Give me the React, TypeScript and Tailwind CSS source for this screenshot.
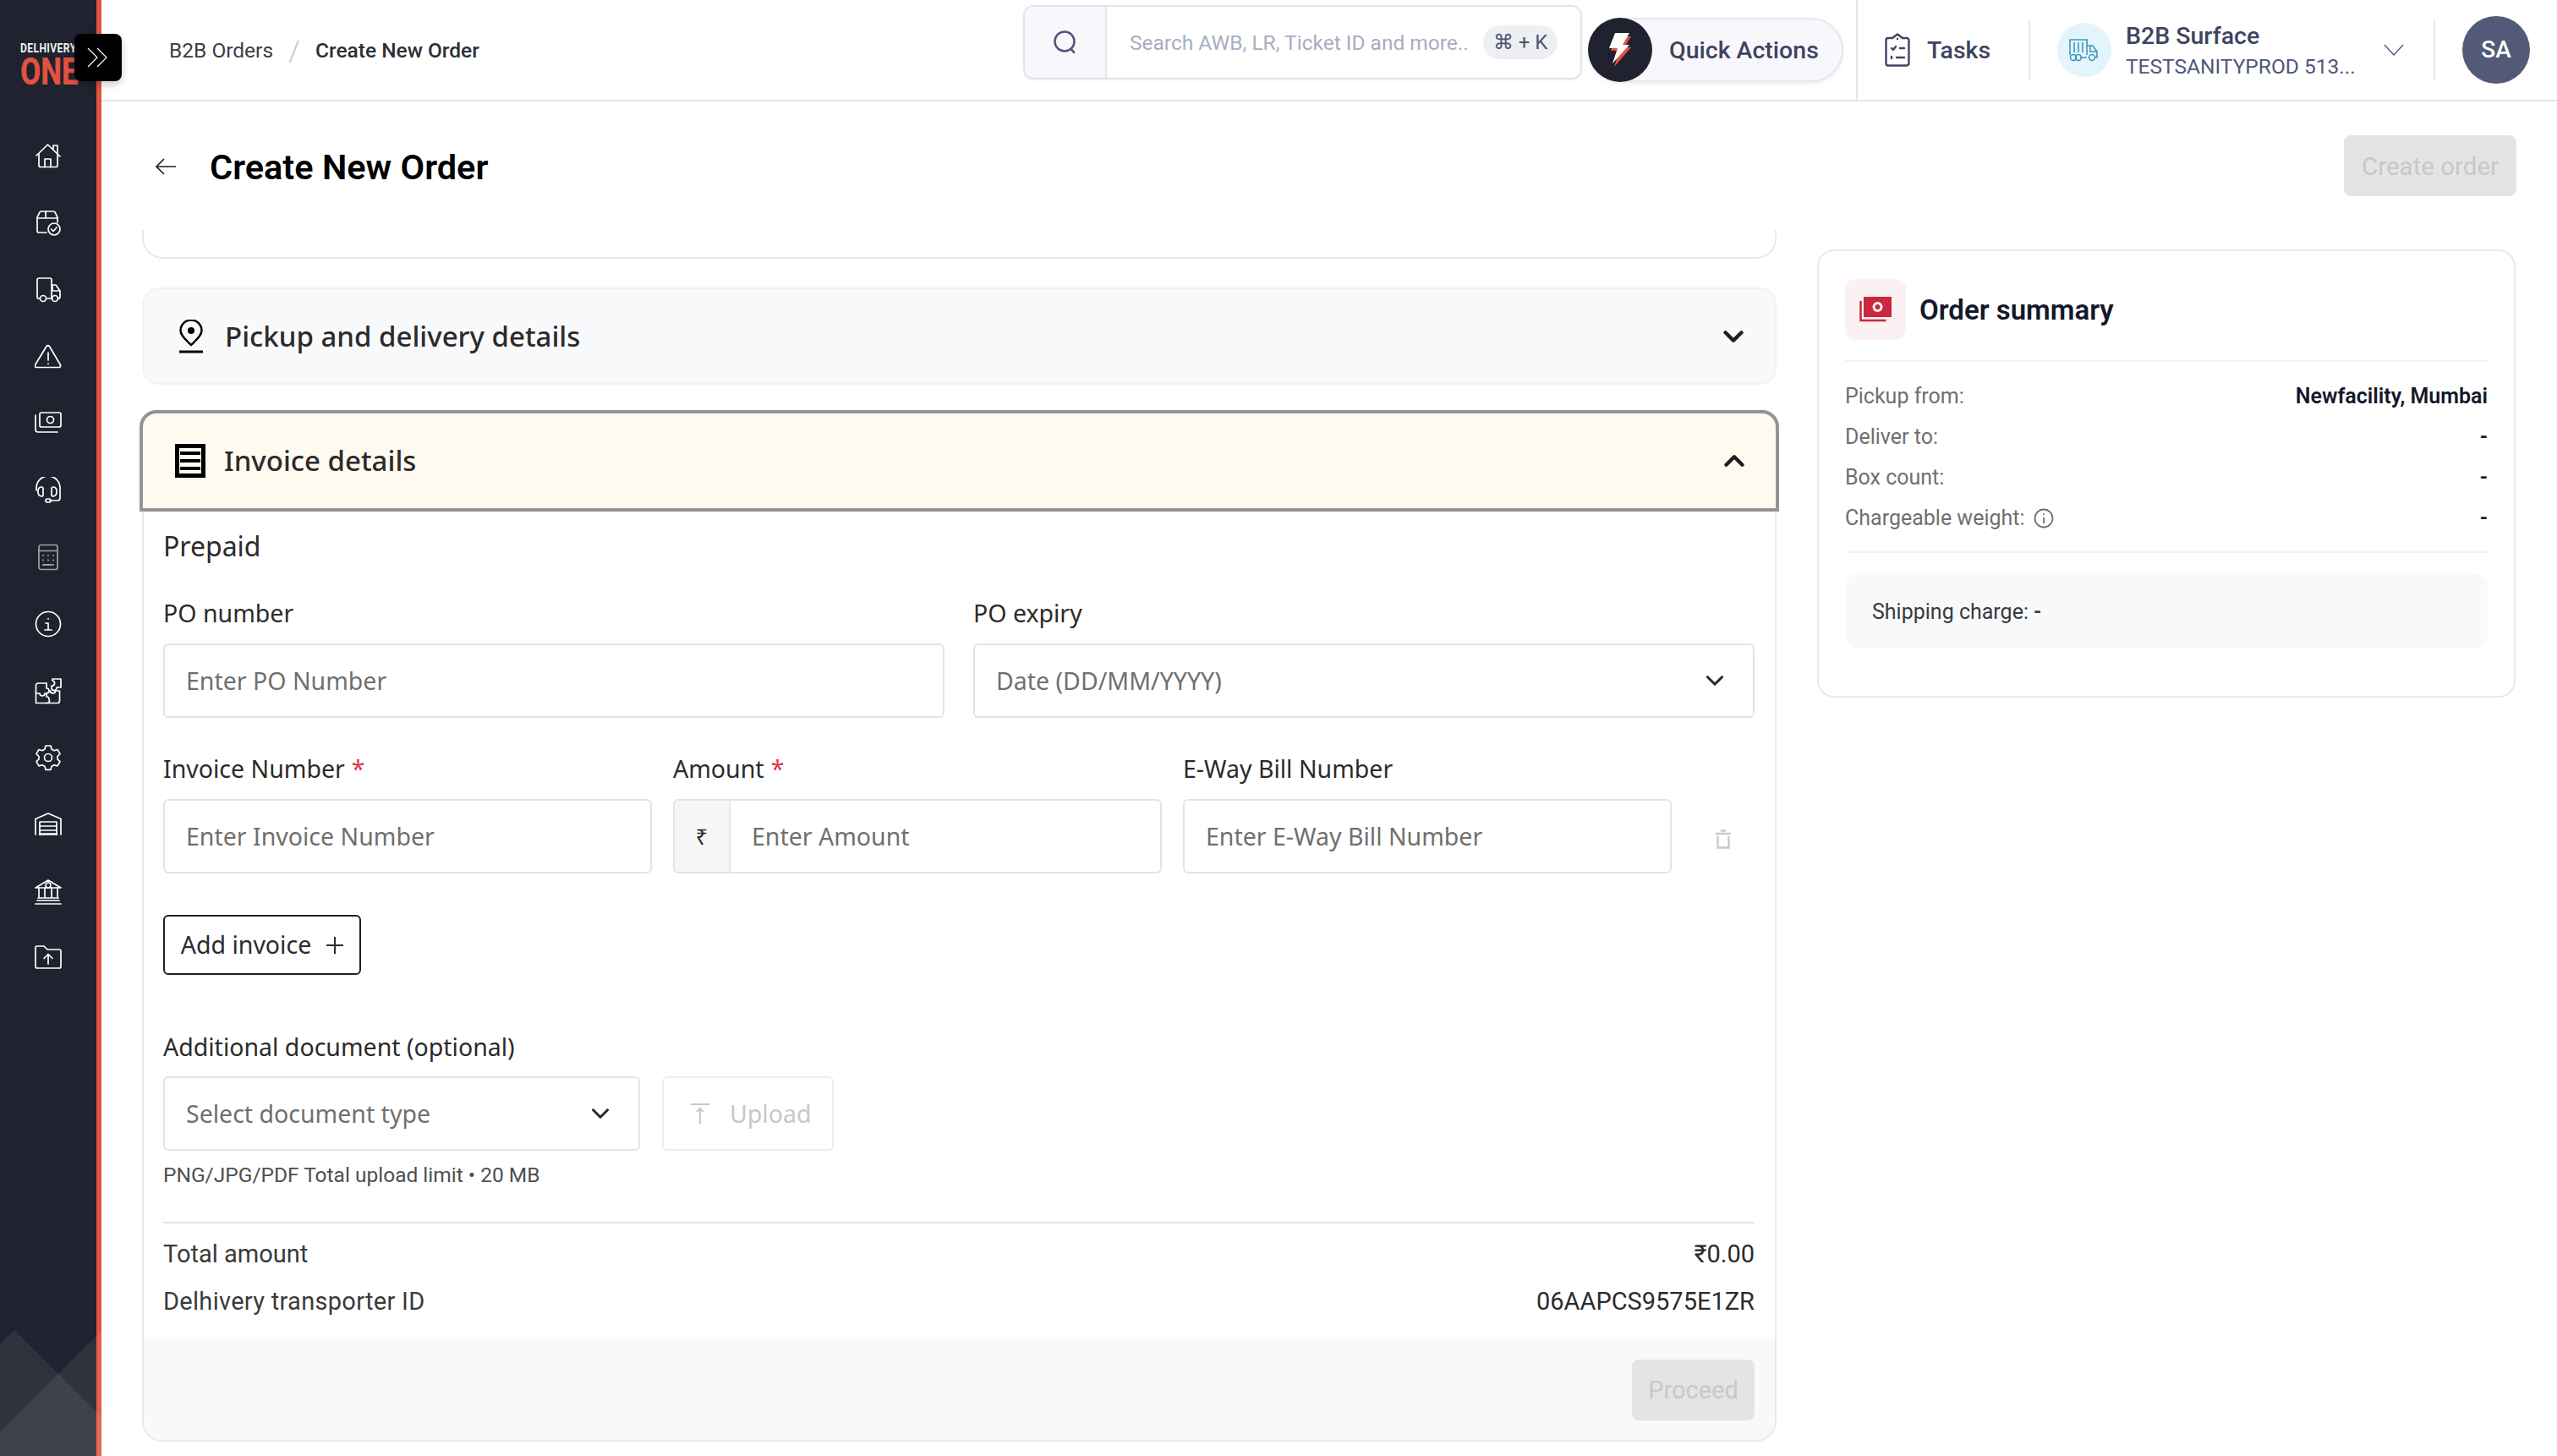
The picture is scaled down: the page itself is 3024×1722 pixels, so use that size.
import { ChevronDown, ChevronUp } from "lucide-react";

const sideIcons = [
  // home
  <g key="home"><path d="M2 15 15.500 2 30 16" /><path d="M5 13v13.500a2 2 0 0 0 2 2h18a2 2 0 0 0 2-2V13" /><path d="M12 28.500V19h7v9.500" /><path d="M22 7V3h5v9" /></g>,
  // box with check
  <g key="box"><path d="M14 27H5a2 2 0 0 1-2-2V9l3-6a2 2 0 0 1 1.500-1h15a2 2 0 0 1 1.500 1l3 6v6" /><path d="M3 10h24M13 2v8" /><circle cx="23" cy="23" r="7" /><path d="m19.500 23 2.500 2.500 4-4.500" /></g>,
  // truck
  <g key="truck"><path d="M6 26H5a2 2 0 0 1-2-2V4a2 2 0 0 1 2-2h13a2 2 0 0 1 2 2v22h-6" /><path d="M20 10h5l5 7v7a2 2 0 0 1-2 2h-1M20 26h1M21 11v6h9" /><circle cx="10" cy="26" r="3.500" /><circle cx="24" cy="26" r="3.500" /></g>,
  // warning
  <g key="warn"><path d="M14 3.500a2 2 0 0 1 3.400 0l13 22a2 2 0 0 1-1.700 3H2.300a2 2 0 0 1-1.700-3Z" /><path d="M16 11v9" /><path d="M16 24v.5" /></g>,
  // money
  <g key="money"><rect x="6" y="3" width="25" height="17" rx="2" /><circle cx="18.500" cy="11.500" r="4" /><path d="M1 6v17a3 3 0 0 0 3 3h23" /></g>,
  // headset
  <g key="headset"><path d="M2 16v-3a14 14 0 0 1 28 0v12a3 3 0 0 1-3 3h-9" /><path d="M7 12h1a2 2 0 0 1 2 2v7a2 2 0 0 1-2 2 5 5 0 0 1-4-5v-1a5 5 0 0 1 3-5Z" /><path d="M23 12h-1a2 2 0 0 0-2 2v7a2 2 0 0 0 2 2 5 5 0 0 0 4-5v-1a5 5 0 0 0-3-5Z" /><rect x="13" y="26" width="6" height="4" rx="2" /></g>,
];

const sideIcons2 = [
  // puzzle
  <g key="puzzle"><path d="M14 7H4a2.500 2.500 0 0 0-2.500 2.500v21h13" /><path d="M14 7v6a3 3 0 0 1 3 3 3 3 0 0 1-3 3v4a3 3 0 0 1 3 3 3 3 0 0 1-3 4.500h13a2.500 2.500 0 0 0 2.500-2.500V16h-5a3 3 0 1 1-6 0" /><path d="M1.500 19H6a3 3 0 1 0 6 0h2" /><path d="M21 2h10v10h-5a3 3 0 0 1-6 1v-3a3 3 0 1 0 1-6Z" /></g>,
  // gear
  <g key="gear"><path d="M13 2h6l1 4 3 1.700 4-1.200 3 5.200-3 2.800v3.400l3 2.800-3 5.200-4-1.200-3 1.700-1 4h-6l-1-4-3-1.700-4 1.200-3-5.200 3-2.800v-3.400l-3-2.800 3-5.200 4 1.200 3-1.700Z" strokeLinejoin="round" /><circle cx="16" cy="16" r="4.500" /></g>,
  // warehouse
  <g key="wh"><path d="M1 28V9.500L16 3l15 6.500V28" /><path d="M6 28V13h20v15" /><path d="M6 18h20M6 23h20" /><path d="M6 27.500h20" strokeWidth="2.500" /></g>,
  // bank
  <g key="bank"><path d="M1 12 16 3l15 9Z" /><circle cx="16" cy="9" r="3" /><path d="M5 12v12M12 12v12M20 12v12M27 12v12M4 24h24" /><path d="M3 27h26M1 31h30" /></g>,
  // folder up
  <g key="folder"><path d="M1 4a2 2 0 0 1 2-2h8l4 4h14a2 2 0 0 1 2 2v18a2 2 0 0 1-2 2H3a2 2 0 0 1-2-2Z" /><path d="M16 23V12M11 16.500l5-5 5 5" /></g>,
];

function SideIcon({ children, muted }: { children: React.ReactNode; muted?: boolean }) {
  return (
    <div className="flex h-[79px] items-center justify-center">
      <svg viewBox="0 0 32 32" fill="none" stroke="currentColor" strokeWidth="1.700" strokeLinecap="round" strokeLinejoin="round" className={`h-[32px] w-[32px] ${muted ? "text-[#a0a1a6]" : "text-white"}`}>
        {children}
      </svg>
    </div>
  );
}

function Sidebar() {
  return (
    <aside className="relative z-10 flex h-full w-[120px] shrink-0 flex-col border-r-[6px] border-[#e2523f] bg-[#20232f]">
      <div className="h-[145px] shrink-0 overflow-hidden pt-[49px] pl-[24px] font-[Roboto]">
        <div className="h-[17px] origin-left scale-x-[0.86] text-[14px] leading-[17px] font-bold tracking-[0.5px] whitespace-nowrap text-[#f2f2f2]">DELHIVERY</div>
        <div className="h-[38px] origin-left scale-x-[0.8] text-[44px] leading-[38px] font-extrabold whitespace-nowrap text-[#e2523f]">ONE</div>
      </div>
      <nav>
        {sideIcons.map((s, i) => (
          <SideIcon key={i}>{s}</SideIcon>
        ))}
        <SideIcon muted>
          <rect x="5" y="1.500" width="22" height="29" rx="2.500" />
          <path d="M5 8.500h22" />
          <path d="M10 14v.1M16 14v.1M22 14v.1M10 19.500v.1M16 19.500v.1M22 19.500v.1M10 25h10M22 25v.1" strokeWidth="2" />
        </SideIcon>
        <SideIcon>
          <circle cx="16" cy="16" r="14.500" />
          <path d="M16 9.500v.5M13 15h3v8M12 23h8" />
        </SideIcon>
        {sideIcons2.map((s, i) => (
          <SideIcon key={i}>{s}</SideIcon>
        ))}
      </nav>
      <svg viewBox="0 0 120 162" className="absolute bottom-0 left-0 h-[162px] w-[120px]">
        <polygon points="17,13 166,162 -132,162" fill="#ffffff" fillOpacity="0.075" />
        <polygon points="120,14 120,162 -28,162" fill="#ffffff" fillOpacity="0.075" />
      </svg>
      <div className="absolute top-[40px] left-[88px] flex h-[56px] w-[56px] items-center justify-center rounded-[8px] bg-black shadow-[0_4px_10px_rgba(0,0,0,0.2)]">
        <svg viewBox="0 0 28 24" fill="none" stroke="white" strokeWidth="1.200" className="h-[24px] w-[28px]">
          <path d="m2 1 11 11L2 23M13 1l11 11-11 11" />
        </svg>
      </div>
    </aside>
  );
}

function Header() {
  return (
    <header className="flex h-[120px] shrink-0 items-center border-b-2 border-[#e4e7ec] bg-white pr-[32px] font-[Roboto]">
      <div className="flex flex-1 items-center pt-[2px] pl-[80px] text-[24.500px] leading-[32px]">
        <span className="text-[#3a3d45]">B2B Orders</span>
        <span className="w-[50px] text-center text-[34px] font-light text-[#c4c4c4]">/</span>
        <span className="font-medium text-[#2d2f36]">Create New Order</span>
      </div>
      <div className="mb-[18px] flex h-[88px] w-[661px] overflow-hidden rounded-[12px] border-2 border-[#e3e5ee] shadow-[0_1px_3px_rgba(0,0,0,0.05)]">
        <div className="flex w-[97px] items-center justify-center border-r-2 border-[#e3e5ee] bg-[#f8f8fc]">
          <svg viewBox="0 0 32 32" fill="none" stroke="#50577a" strokeWidth="2.600" strokeLinecap="round" className="h-[32px] w-[32px]">
            <circle cx="15" cy="15" r="11.500" />
            <path d="m23 24 3 4" />
          </svg>
        </div>
        <div className="flex flex-1 items-center pl-[27px]">
          <span className="w-[418px] pt-[2px] text-[24.500px] whitespace-nowrap text-[#a8adc4]">Search AWB, LR, Ticket ID and more..</span>
          <span className="flex h-[40px] w-[88px] items-center justify-center rounded-full bg-[#eeeff2] text-[24px] text-[#4e5470]">⌘ + K</span>
        </div>
      </div>
      <div className="relative ml-[7px] flex h-[76px] w-[302px] items-center rounded-full border-2 border-[#e5e7f0] bg-[#f8f8fc] pt-[2px] pl-[94px] shadow-[0_2px_4px_rgba(0,0,0,0.08)]">
        <span className="absolute -top-[2px] -left-[2px] flex h-[76px] w-[76px] items-center justify-center rounded-full bg-[#20232f]">
          <svg viewBox="0 0 32 44" className="h-[44px] w-[32px]">
            <path d="M12 6h17l-8 13h8L9 42l6-19H5Z" fill="#e2523f" />
            <path d="M10 2h17l-8 14h8L7 38l6-18H3Z" fill="#ffffff" />
          </svg>
        </span>
        <span className="text-[28.500px] font-medium whitespace-nowrap text-[#3e4460]">Quick Actions</span>
      </div>
      <div className="ml-[15px] flex h-[118px] items-center border-l-2 border-[#e3e5ee] pl-[32px]">
        <svg viewBox="0 0 30 40" fill="none" stroke="#3e4460" strokeWidth="2.400" strokeLinecap="round" strokeLinejoin="round" className="h-[40px] w-[30px]">
          <path d="M9 6H4a2.500 2.500 0 0 0-2.500 2.500V36A2.500 2.500 0 0 0 4 38.500h22a2.500 2.500 0 0 0 2.500-2.500V8.500A2.500 2.500 0 0 0 26 6h-5l-6-4.500Z" />
          <path d="M15 7v.1M8 18l2 2 3-4M18 18h5M8 28v2M14 29h9" />
        </svg>
        <span className="ml-[20px] w-[72px] pt-[2px] text-[28.500px] font-medium text-[#3e4460]">Tasks</span>
        <div className="ml-[48px] h-[72px] border-l-2 border-[#e3e5ee]" />
        <div className="ml-[32px] flex h-[64px] w-[64px] items-center justify-center rounded-full bg-[#e3f5fb]">
          <svg viewBox="0 0 36 28" fill="none" stroke="#3f96bd" strokeWidth="1.600" className="h-[28px] w-[36px]">
            <path d="M1 20V2h20v18M6 5v12M11 5v12M16 5v12" />
            <path d="M21 9h7l5 7v7h-3M21 23h-8" />
            <path d="M25 9v7h8" />
            <circle cx="5" cy="23" r="3.500" />
            <circle cx="11" cy="23" r="3.500" />
            <circle cx="27" cy="23" r="3.500" />
          </svg>
        </div>
        <div className="ml-[17px] w-[305px] pt-[3px]">
          <div className="h-[36px] text-[28.500px] leading-[36px] font-medium text-[#3e4460]">B2B Surface</div>
          <div className="text-[24.500px] leading-[36px] whitespace-nowrap text-[#50577a]">TESTSANITYPROD 513...</div>
        </div>
        <svg viewBox="0 0 24 14" fill="none" stroke="#50577a" strokeWidth="1.400" className="h-[14px] w-[24px]">
          <path d="m1 1 11 12L23 1" />
        </svg>
        <div className="ml-[35px] h-[72px] border-l-2 border-[#e3e5ee]" />
        <div className="ml-[32px] flex h-[80px] w-[80px] items-center justify-center rounded-full bg-[#535a78] text-[28px] font-medium text-white">SA</div>
      </div>
    </header>
  );
}

function Label({ text, required }: { text: string; required?: boolean }) {
  return (
    <div className="h-[36px] text-[28.500px] leading-[36px] text-[#2b2b2b]">
      {text}
      {required && <span className="ml-[8px] text-[#e0313f]">*</span>}
    </div>
  );
}

function Box({ text, className, chevron }: { text: string; className?: string; chevron?: boolean }) {
  return (
    <div className={`flex h-[88px] items-center rounded-[6px] border-2 border-[#e4e4e4] pr-[28px] pl-[25px] text-[28.500px] text-[#6f6f6f] ${className ?? ""}`}>
      <span className="flex-1 whitespace-nowrap">{text}</span>
      {chevron && <ChevronDown size={34} strokeWidth={2.2} color="#2b2b2b" />}
    </div>
  );
}

function Accordion() {
  return (
    <div className="w-[1933px] shrink-0">
      <div className="h-[34px] rounded-b-[24px] border-x-2 border-b-2 border-[#e8e9ed]" />
      <div className="mt-[34px] flex h-[115px] items-center rounded-[20px] border-2 border-[#f1f2f5] bg-[#f8f9fb] pr-[30px] pl-[42px]">
        <svg viewBox="0 0 28 40" fill="none" stroke="#000" strokeWidth="2.400" className="h-[40px] w-[28px]">
          <path d="M14 30C8 24 1.500 19 1.500 13a12.500 12.500 0 0 1 25 0C26.500 19 20 24 14 30Z" />
          <circle cx="14" cy="13" r="4" fill="#000" stroke="none" />
          <path d="M0 38h28" strokeWidth="3" />
        </svg>
        <span className="ml-[26px] flex-1 text-[33px] font-medium text-[#2b2b2b]">Pickup and delivery details</span>
        <ChevronDown size={38} strokeWidth={2.8} color="#1f1f1f" />
      </div>
      <div className="mx-[-3px] mt-[30px] flex h-[120px] items-center rounded-t-[20px] border-4 border-[#949494] bg-[#fffaef] pr-[30px] pl-[38px]">
        <svg viewBox="0 0 36 40" className="h-[40px] w-[36px]">
          <path d="M0 0h36v40H0Z" fill="#000" />
          <path d="M5 5h26v30H5Z" fill="#fffaef" />
          <path d="M6 9h24v4H6ZM6 18h24v4H6ZM6 27h24v4H6Z" fill="#000" />
        </svg>
        <span className="ml-[22px] flex-1 text-[33px] font-medium text-[#2b2b2b]">Invoice details</span>
        <ChevronUp size={38} strokeWidth={2.8} color="#1f1f1f" />
      </div>
      <div className="overflow-hidden rounded-b-[24px] border-x-2 border-b-2 border-[#e8e9ed]">
        <div className="pt-[21px] pr-[24px] pl-[23px]">
          <div className="h-[40px] text-[32px] leading-[40px] text-[#2b2b2b]">Prepaid</div>
          <div className="mt-[41px] grid grid-cols-2 gap-x-[34px]">
            <Label text="PO number" />
            <Label text="PO expiry" />
            <Box text="Enter PO Number" className="mt-[18px]" />
            <Box text="Date (DD/MM/YYYY)" chevron className="mt-[18px]" />
          </div>
          <div className="mt-[42px] flex gap-x-[25px]">
            <div className="w-[578px]">
              <Label text="Invoice Number" required />
              <Box text="Enter Invoice Number" className="mt-[18px]" />
            </div>
            <div className="w-[578px]">
              <Label text="Amount" required />
              <div className="mt-[18px] flex h-[88px] overflow-hidden rounded-[6px] border-2 border-[#e4e4e4] text-[28.500px]">
                <span className="flex w-[66px] items-center justify-center border-r-2 border-[#e8e8e8] bg-[#f6f6f6] text-[26px] text-[#2b2b2b]">₹</span>
                <span className="flex flex-1 items-center pl-[25px] text-[#6f6f6f]">Enter Amount</span>
              </div>
            </div>
            <div className="w-[578px]">
              <Label text="E-Way Bill Number" />
              <Box text="Enter E-Way Bill Number" className="mt-[18px]" />
            </div>
            <div className="ml-[27px] flex items-end pb-[28px]">
              <svg viewBox="0 0 18 24" fill="none" stroke="#c9c9c9" strokeWidth="2.400" className="h-[24px] w-[18px]">
                <path d="M6 1.500h6M0 5h18" />
                <path d="M2.500 8v13.500h13V8" />
              </svg>
            </div>
          </div>
          <button className="mt-[49px] flex h-[71px] w-[234px] items-center justify-center gap-[18px] rounded-[6px] border-2 border-[#1f1f1f] text-[28.500px] text-[#2b2b2b]">
            Add invoice
            <svg viewBox="0 0 20 20" stroke="#2b2b2b" strokeWidth="2" className="h-[20px] w-[20px]">
              <path d="M10 0v20M0 10h20" />
            </svg>
          </button>
          <div className="mt-[67px]">
            <Label text="Additional document (optional)" />
          </div>
          <div className="mt-[17px] flex gap-[26px]">
            <Box text="Select document type" chevron className="w-[564px]" />
            <div className="flex h-[88px] w-[203px] items-center rounded-[6px] border-2 border-[#eeeeee] pl-[32px] text-[28.500px] text-[#c8c8c8]">
              <svg viewBox="0 0 22 24" fill="none" stroke="#c8c8c8" strokeWidth="2" className="h-[24px] w-[22px]">
                <path d="M0 1h22M11 6v18M7 10l4-4 4 4" />
              </svg>
              <span className="ml-[24px]">Upload</span>
            </div>
          </div>
          <div className="mt-[13px] font-[Roboto] text-[24.500px] leading-[32px] text-[#4f4f4f]">PNG/JPG/PDF Total upload limit • 20 MB</div>
          <div className="mt-[39px] h-[2px] bg-[#e4e4e4]" />
          <div className="mt-[18px] flex h-[36px] items-center justify-between pt-[2px] font-[Roboto] text-[29px] text-[#3a3a3a]">
            <span>Total amount</span>
            <span className="text-[#2b2b2b]">₹0.00</span>
          </div>
          <div className="mt-[20px] flex h-[36px] items-center justify-between pt-[2px] font-[Roboto] text-[29px] text-[#3a3a3a]">
            <span className="tracking-[0.3px]">Delhivery transporter ID</span>
            <span className="text-[#2b2b2b]">06AAPCS9575E1ZR</span>
          </div>
        </div>
        <div className="mt-[27px] flex h-[119px] justify-end bg-[#f8f9fb] pt-[24px] pr-[24px]">
          <div className="flex h-[72px] w-[145px] items-center justify-center rounded-[8px] bg-[#e4e4e4] pt-[2px] font-[Roboto] text-[29px] text-[#c8c8c8]">Proceed</div>
        </div>
      </div>
    </div>
  );
}

function SummaryRow({ label, value, info }: { label: string; value: string; info?: boolean }) {
  return (
    <div className="flex h-[48px] items-center justify-between text-[25px]">
      <span className="flex items-center gap-[10px] text-[#6f6f6f]">
        {label}
        {info && (
          <svg viewBox="0 0 24 24" fill="none" stroke="#6f6f6f" strokeWidth="1.800" className="h-[24px] w-[24px]">
            <circle cx="12" cy="12" r="10.500" />
            <path d="M12 11v7M12 6.500v1.500" />
          </svg>
        )}
      </span>
      <span className="font-semibold text-[#14182b]">{value}</span>
    </div>
  );
}

function Summary() {
  return (
    <div className="mt-[23px] h-[530px] w-[826px] shrink-0 rounded-[20px] border-2 border-[#e8e9ed] px-[31px] pt-[33px] font-[Roboto]">
      <div className="flex items-center gap-[16px] border-b-2 border-[#f2f3f5] pb-[24px]">
        <span className="flex h-[72px] w-[72px] items-center justify-center rounded-[12px] bg-[#fbf1f3]">
          <svg viewBox="0 0 38 30" className="h-[30px] w-[38px]">
            <path d="M5 0h33v24H5Z" fill="#c9283e" />
            <circle cx="21.500" cy="12" r="6" fill="#fbf1f3" />
            <circle cx="21.500" cy="12" r="3" fill="#c9283e" />
            <path d="M1.500 5v23h30" fill="none" stroke="#c9283e" strokeWidth="2.500" />
          </svg>
        </span>
        <span className="pt-[2px] text-[33px] font-semibold text-[#14182b]">Order summary</span>
      </div>
      <div className="mt-[17px] border-b-2 border-[#f2f3f5] pb-[15px]">
        <SummaryRow label="Pickup from:" value="Newfacility, Mumbai" />
        <SummaryRow label="Deliver to:" value="-" />
        <SummaryRow label="Box count:" value="-" />
        <SummaryRow label="Chargeable weight:" value="-" info />
      </div>
      <div className="mt-[24px] flex h-[89px] items-center rounded-[16px] bg-[#f8f9fb] pt-[3px] pl-[32px] text-[25px] text-[#3a3a3a]">
        Shipping charge: <span className="ml-[6px] font-semibold">-</span>
      </div>
    </div>
  );
}

export default function App() {
  return (
    <div className="flex h-[1722px] w-[3024px] overflow-hidden bg-white font-['Noto_Sans',sans-serif]">
      <Sidebar />
      <div className="flex min-w-0 flex-1 flex-col">
        <Header />
        <div className="flex h-[152px] shrink-0 items-start justify-between pr-[48px]">
          <div className="flex h-[154px] items-center pl-[64px]">
            <svg viewBox="0 0 24 20" fill="none" stroke="#1f1f1f" strokeWidth="1.600" className="h-[20px] w-[24px]">
              <path d="M24 10H1M10 1l-9 9 9 9" />
            </svg>
            <h1 className="ml-[40px] pt-[2px] font-[Roboto] text-[41.500px] font-semibold text-black">Create New Order</h1>
          </div>
          <div className="mt-[40px] flex h-[72px] w-[204px] items-center justify-center rounded-[8px] bg-[#e4e4e4] pt-[2px] font-[Roboto] text-[29.500px] text-[#c8c8c8]">Create order</div>
        </div>
        <div className="flex gap-[48px] pl-[48px]">
          <Accordion />
          <Summary />
        </div>
      </div>
    </div>
  );
}
